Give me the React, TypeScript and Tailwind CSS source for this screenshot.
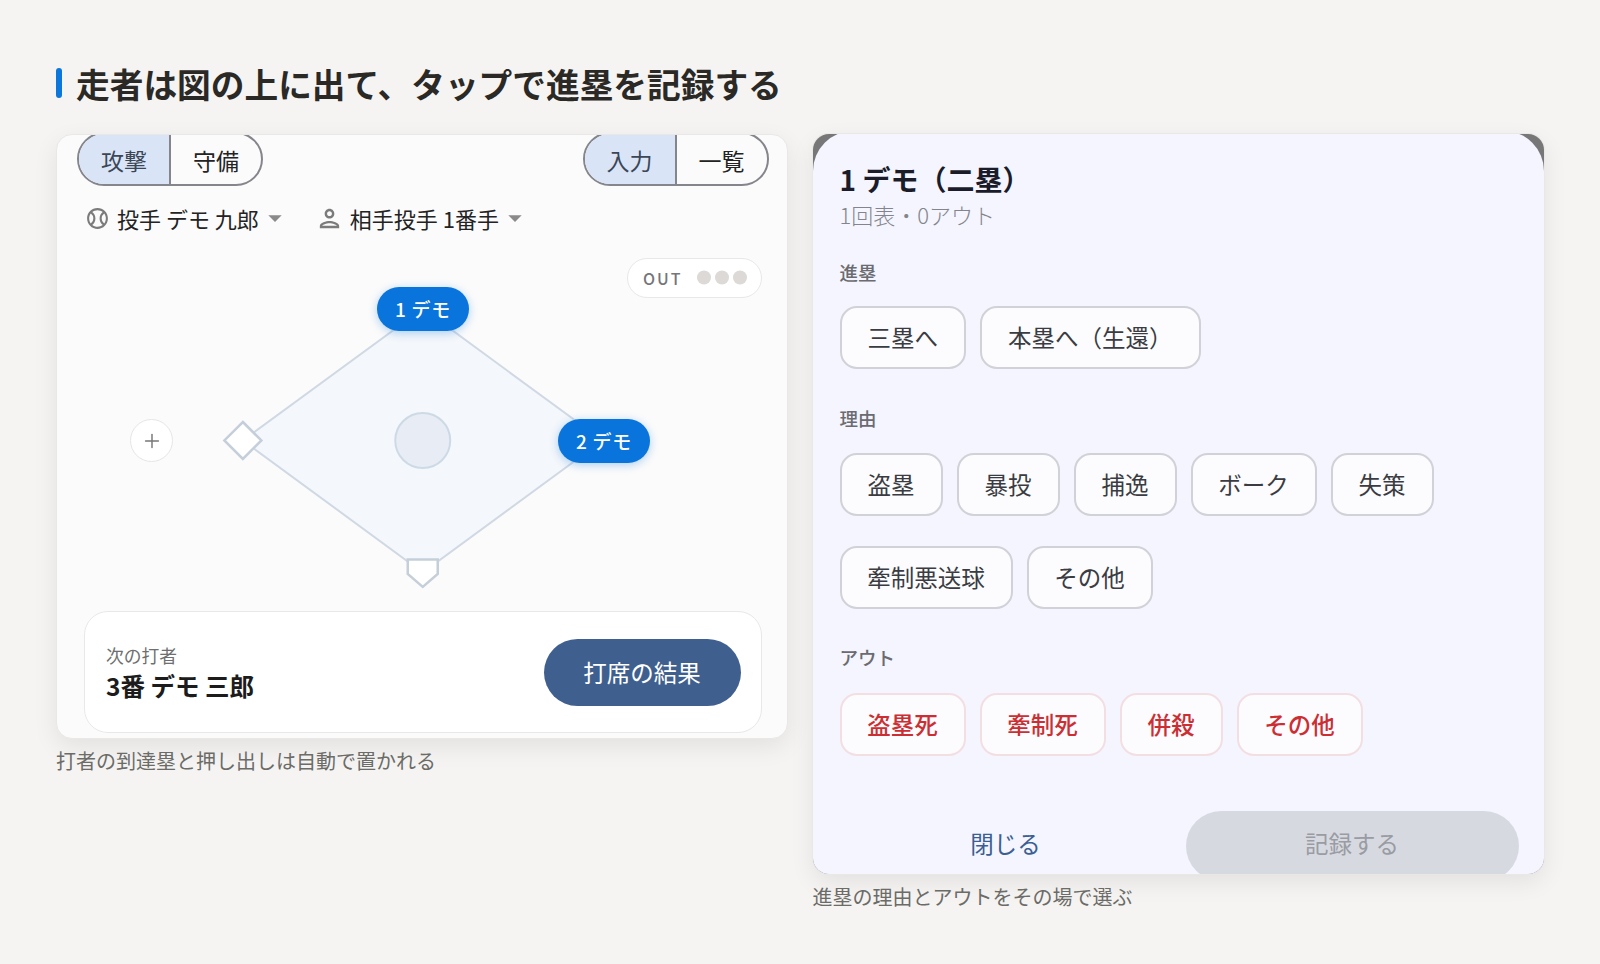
import { MdOutlineSportsBaseball, MdOutlinePerson, MdArrowDropDown } from "react-icons/md";
import { Plus } from "lucide-react";

function Seg({ a, b }: { a: string; b: string }) {
  return (
    <div className="flex h-[54px] w-[186px] overflow-hidden rounded-full border-2 border-[#85858c] text-[23px] leading-none">
      <div className="flex flex-1 items-center justify-center border-r-2 border-[#85858c] bg-[#d9e4f7] pt-[3px] text-[#3b4656]">{a}</div>
      <div className="flex flex-1 items-center justify-center pt-[3px] text-[#232323]">{b}</div>
    </div>
  );
}

function Chip({ children, w, red }: { children: string; w: string; red?: boolean }) {
  return (
    <button
      className={
        w +
        " flex h-[63px] items-center justify-center rounded-[17px] border-2 bg-[#fcfcfe] text-[23.5px] " +
        (red ? "border-[#f3dfe2] font-medium text-[#cc2f33]" : "border-[#d1d2d8] text-[#3b3c42]")
      }
    >
      {children}
    </button>
  );
}

function Label({ children, className }: { children: string; className: string }) {
  return <div className={"h-[26px] text-[18.5px] leading-[26px] font-medium text-[#6b6b70] " + className}>{children}</div>;
}

function Runner({ text, className }: { text: string; className: string }) {
  return (
    <div
      className={
        "absolute flex h-[44px] w-[92px] items-center justify-center rounded-full bg-[#0874dc] text-[19px] font-medium tracking-[0.04em] text-white shadow-[0_2px_10px_rgba(8,116,220,0.32)] " +
        className
      }
    >
      {text}
    </div>
  );
}

export default function App() {
  return (
    <div className="min-h-[964px] bg-[#f5f4f2] px-[56px] pt-[62px] font-['Noto_Sans_CJK_JP','Noto_Sans',sans-serif]">
      <div className="flex h-[44px] items-center gap-[14px]">
        <div className="h-[30px] w-[6px] -translate-y-[1px] rounded-[3px] bg-[#0b76db]" />
        <h1 className="text-[33.7px] leading-[44px] font-bold text-[#2a2926]">走者は図の上に出て、タップで進塁を記録する</h1>
      </div>

      <div className="mt-[28px] grid grid-cols-2 items-start gap-[25px]">
        <div>
          <div className="flex h-[605px] flex-col overflow-hidden rounded-[16px] border border-[#e9e8e6] bg-[#fbfbfb] shadow-[0_8px_24px_rgba(0,0,0,0.08)]">
            <div className="-mt-[3px] flex justify-between pr-[18px] pl-[20px]">
              <Seg a="攻撃" b="守備" />
              <Seg a="入力" b="一覧" />
            </div>
            <div className="mt-[12px] mb-[2px] flex h-[40px] items-center pl-[28px] text-[22px] text-[#232323]">
              <MdOutlineSportsBaseball className="h-[25px] w-[25px] text-[#7b7b7b]" />
              <span className="ml-[7px]">投手 デモ 九郎</span>
              <MdArrowDropDown className="h-[32px] w-[32px] text-[#8a8a8a]" />
              <MdOutlinePerson className="ml-[24px] h-[29px] w-[29px] text-[#7b7b7b]" />
              <span className="ml-[6px]">相手投手 1番手</span>
              <MdArrowDropDown className="h-[32px] w-[32px] text-[#8a8a8a]" />
            </div>

            <div className="relative h-[371px] shrink-0">
              <svg className="absolute inset-0 h-full w-full" viewBox="0 0 730 371">
                <polygon points="366,68.6 546,200.5 366,332.6 186,200.5" fill="#f4f7fb" stroke="#d0d9e3" strokeWidth="2" />
                <polygon points="186,182 204.5,200.5 186,219 167.5,200.5" fill="#ffffff" stroke="#c5cfda" strokeWidth="2.5" />
                <polygon points="351,319.5 381,319.5 381,334 366,347 351,334" fill="#ffffff" stroke="#c5cfda" strokeWidth="2.5" />
                <circle cx="366" cy="200.5" r="27.5" fill="#e8edf5" stroke="#cddae5" strokeWidth="2" />
              </svg>
              <div className="absolute top-[179px] left-[73px] flex h-[43px] w-[43px] items-center justify-center rounded-full border border-[#e6e6e6] bg-white text-[#777777]">
                <Plus size={22} strokeWidth={1.6} />
              </div>
              <Runner text="1 デモ" className="top-[47px] left-[320px]" />
              <Runner text="2 デモ" className="top-[179px] left-[501px]" />
              <div className="absolute top-[18px] left-[570px] flex h-[40px] w-[135px] items-center rounded-full border border-[#e8e8e8] bg-white pl-[15px] text-[16px] font-medium tracking-[0.12em] text-[#75757a]">
                OUT
                <span className="ml-[15px] flex -translate-y-[0.5px] gap-[4px]">
                  <i className="h-[14px] w-[14px] rounded-full bg-[#dcd9d7]" />
                  <i className="h-[14px] w-[14px] rounded-full bg-[#dcd9d7]" />
                  <i className="h-[14px] w-[14px] rounded-full bg-[#dcd9d7]" />
                </span>
              </div>
            </div>

            <div className="mr-[25px] ml-[27px] flex h-[122px] items-center justify-between rounded-[24px] border border-[#e8e8e8] bg-white pr-[20px] pl-[21px]">
              <div>
                <div className="text-[17.8px] leading-[24px] text-[#6f6f6f]">次の打者</div>
                <div className="mt-[3px] text-[24.5px] leading-[32px] font-bold text-[#1c1c1c]">3番 デモ 三郎</div>
              </div>
              <button className="flex h-[67px] w-[197px] items-center justify-center rounded-full bg-[#3f5f8e] pt-[2px] text-[23.5px] text-white">打席の結果</button>
            </div>
          </div>
          <p className="mt-[8px] text-[20px] leading-[28px] text-[#6b6b68]">打者の到達塁と押し出しは自動で置かれる</p>
        </div>

        <div>
          <div className="h-[740px] overflow-hidden rounded-[16px] bg-[#777777] shadow-[0_0_0_1px_#e9e8e6,0_8px_24px_rgba(0,0,0,0.08)]">
            <div className="-mt-[3px] h-[745px] overflow-hidden rounded-t-[40px] bg-[#f4f5fe] pt-[30px] pl-[27px]">
              <div className="text-[28px] leading-[36px] font-bold text-[#1a1c2a]">1 デモ（二塁）</div>
              <div className="mt-[3px] text-[22px] leading-[28px] font-light text-[#84858c]">1回表・0アウト</div>

              <Label className="mt-[31px]">進塁</Label>
              <div className="mt-[21px] flex gap-[14px]">
                <Chip w="w-[126.5px]">三塁へ</Chip>
                <Chip w="w-[220.5px]">本塁へ（生還）</Chip>
              </div>

              <Label className="mt-[36px]">理由</Label>
              <div className="mt-[22px] flex w-[680px] flex-wrap gap-x-[14px] gap-y-[30px]">
                <Chip w="w-[103px]">盗塁</Chip>
                <Chip w="w-[103px]">暴投</Chip>
                <Chip w="w-[103px]">捕逸</Chip>
                <Chip w="w-[126px]">ボーク</Chip>
                <Chip w="w-[103px]">失策</Chip>
                <Chip w="w-[173px]">牽制悪送球</Chip>
                <Chip w="w-[126px]">その他</Chip>
              </div>

              <Label className="mt-[35px]">アウト</Label>
              <div className="mt-[23px] flex gap-[14px]">
                <Chip red w="w-[126px]">盗塁死</Chip>
                <Chip red w="w-[126px]">牽制死</Chip>
                <Chip red w="w-[103px]">併殺</Chip>
                <Chip red w="w-[126px]">その他</Chip>
              </div>

              <div className="mt-[55px] grid grid-cols-[332px_333px] gap-[14px]">
                <button className="h-[70px] pb-[4px] text-[23.5px] text-[#3b5f92]">閉じる</button>
                <button className="h-[70px] rounded-full bg-[#d7d9e1] pb-[4px] text-[23.5px] text-[#9a9ca3]">記録する</button>
              </div>
            </div>
          </div>
          <p className="mt-[9px] text-[20px] leading-[28px] text-[#6b6b68]">進塁の理由とアウトをその場で選ぶ</p>
        </div>
      </div>
    </div>
  );
}
